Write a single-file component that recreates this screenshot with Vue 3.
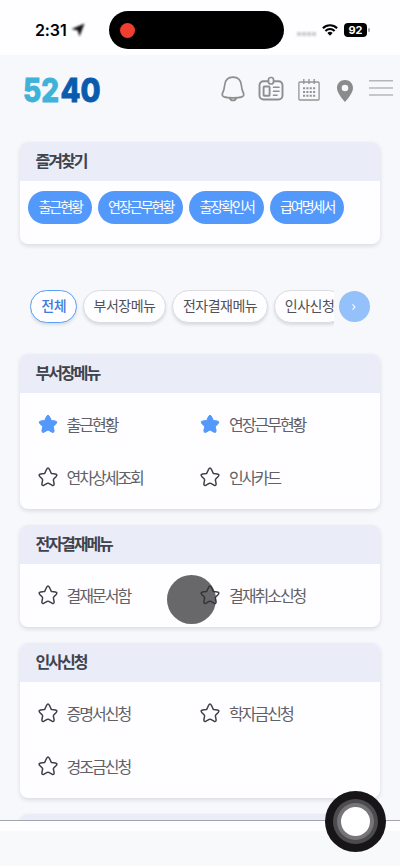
<script setup>
const favorites = ['출근현황', '연장근무현황', '출장확인서', '급여명세서']
const tabs = ['전체', '부서장메뉴', '전자결재메뉴', '인사신청']
const groups = [
  {
    title: '부서장메뉴',
    items: [
      { name: '출근현황', on: true },
      { name: '연장근무현황', on: true },
      { name: '연차상세조회' },
      { name: '인사카드' }
    ]
  },
  { title: '전자결재메뉴', items: [{ name: '결재문서함' }, { name: '결재취소신청' }] },
  { title: '인사신청', items: [{ name: '증명서신청' }, { name: '학자금신청' }, { name: '경조금신청' }] }
]
</script>

<template>
  <div class="phone">
    <header class="status">
      <span class="time">2:31</span>
      <svg class="arrow" width="16" height="16" viewBox="0 0 16 16"><path d="M14.500 1.500 9.500 14.500 7.700 8.500 1.500 7Z" /></svg>
      <div class="island"><span class="rec"></span></div>
      <span class="signal"><i v-for="n in 4" :key="n"></i></span>
      <svg class="wifi" width="16" height="12" viewBox="0 0 16 12">
        <path d="M.9 4.2a10.2 10.2 0 0 1 14.2 0M3.4 6.9a6.6 6.6 0 0 1 9.2 0" fill="none" stroke="#000" stroke-width="2.1" />
        <path d="M8 11.8 5.4 9.1a3.7 3.7 0 0 1 5.2 0Z" />
      </svg>
      <span class="battery">92</span><span class="cap"></span>
    </header>

    <nav class="topbar">
      <svg class="logo" width="82" height="48" viewBox="0 0 82 48">
        <text x="1" y="36" textLength="36" lengthAdjust="spacingAndGlyphs" fill="#3eb2d8" stroke="#3eb2d8">52</text>
        <text x="38.500" y="36" textLength="40" lengthAdjust="spacingAndGlyphs" fill="#095bae" stroke="#095bae">40</text>
      </svg>
      <div class="tools">
        <svg width="24" height="26" viewBox="0 0 24 26" fill="none" stroke="#8e8e8e" stroke-width="1.7" stroke-linejoin="round">
          <path d="M12 1.200C7 1.200 4.200 4.500 3.700 9c-.4 3.500-.7 5.300-1.900 7.500-1.100 2.200-.6 3.600 1.400 4.400 3.400 1.200 14.200 1.200 17.600 0 2-.8 2.500-2.200 1.400-4.400-1.200-2.200-1.500-4-1.900-7.500C19.800 4.500 17 1.200 12 1.200Z" />
          <path d="M8.700 21.700c.4 1.800 1.600 2.700 3.300 2.700s2.900-.9 3.300-2.700" />
        </svg>
        <svg width="26" height="26" viewBox="0 0 26 26" fill="none" stroke="#8e8e8e" stroke-width="1.9" stroke-linecap="round">
          <path d="M10 5.200H5.500a4 4 0 0 0-4 4v10.300a4 4 0 0 0 4 4h15a4 4 0 0 0 4-4V9.200a4 4 0 0 0-4-4H16" />
          <rect x="10.500" y="1.500" width="5" height="6.500" rx="2.300" stroke-width="1.700" />
          <rect x="5.600" y="10.500" width="6" height="9.200" rx=".7" />
          <path d="M15.500 11.300h5.500M15.500 15.200h5.500M15.500 19.200h3.500" stroke-width="1.600" />
        </svg>
        <svg width="22" height="24" viewBox="0 0 22 24" fill="none" stroke="#949494">
          <rect x=".9" y="4" width="20.200" height="18" rx="1" stroke-width="1.300" />
          <path d="M5.800 1v5M11 1v5M16.200 1v5" stroke-width="1.400" />
          <path d="M5 10.200h12.500M5 14h12.500M5 17.800h12.500" stroke-width="2" stroke-dasharray="2.100 1.250" />
        </svg>
        <svg width="18" height="24" viewBox="0 0 18 24">
          <path d="M9 1C4.400 1 1 4.400 1 8.900 1 14 7 20.600 9 23c2-2.400 8-9 8-14.100C17 4.400 13.600 1 9 1Zm0 4.700a3.300 3.300 0 1 1 0 6.600 3.300 3.300 0 0 1 0-6.600Z" fill="#8b8b8b" fill-rule="evenodd" />
        </svg>
        <svg width="24" height="20" viewBox="0 0 24 20"><path d="M0 2.800h24M0 9.900h24M0 17h24" stroke="#b6b6b8" stroke-width="1.500" /></svg>
      </div>
    </nav>

    <main class="content">
      <section class="card favorites">
        <h2>즐겨찾기</h2>
        <div class="pills"><span v-for="f in favorites" :key="f" class="pill">{{ f }}</span></div>
      </section>

      <div class="tabs">
        <div class="track">
          <span v-for="(t, i) in tabs" :key="t" class="tab" :class="{ active: i === 0 }">{{ t }}</span>
        </div>
        <button class="next" aria-label="다음">
          <svg width="6" height="8" viewBox="0 0 6 8"><path d="m1.500 1.300 2.500 2.700-2.500 2.700" fill="none" stroke="#fff" stroke-width="1.100" /></svg>
        </button>
      </div>

      <section v-for="g in groups" :key="g.title" class="card group">
        <h2>{{ g.title }}</h2>
        <ul>
          <li v-for="item in g.items" :key="item.name">
            <svg class="star" :class="{ on: item.on }" width="20" height="20" viewBox="0 0 20 20">
              <path d="M8.600 2.300q1.400-2.400 2.800 0l1.700 3.700q.3.500.9.600l3.300.4q2.600.5.900 2.500l-2.500 2.600q-.4.500-.3 1l.7 3.500q.2 2.500-2.100 1.600l-3.200-1.800q-.8-.4-1.600 0L6 18.200q-2.300.9-2.100-1.600l.7-3.500q.1-.5-.3-1L1.800 9.500Q.1 7.500 2.700 7L6 6.600q.6-.1.900-.6Z" />
            </svg>
            <span>{{ item.name }}</span>
          </li>
        </ul>
      </section>
      <div class="card peek"></div>
    </main>

    <footer class="bottom"></footer>
    <div class="touch"></div>
    <div class="assist"><div class="ring"><div class="ring inner"><div class="core"></div></div></div></div>
  </div>
</template>

<style>
body { margin: 0; background: #f6f8fb; }
</style>

<style scoped>
* { box-sizing: border-box; }
.phone {
  position: relative;
  display: flex;
  flex-direction: column;
  width: 400px;
  height: 866px;
  overflow: hidden;
  background: #f6f8fb;
  color: #3f434e;
  font-family: "Noto Sans CJK KR", sans-serif;
}
.status { display: flex; align-items: center; flex: none; height: 55px; padding: 5px 0 0 35px; background: #fefdff; }
.time { width: 34px; color: #000; font: 600 16px/20px Inter, sans-serif; letter-spacing: -0.1px; white-space: nowrap; }
.arrow { margin-left: 1px; filter: blur(0.9px); fill: #111; }
.island { display: flex; align-items: center; width: 175px; height: 38px; margin-left: 23px; padding-left: 11px; border-radius: 19px; background: #000; }
.rec { width: 15px; height: 15px; border-radius: 50%; background: #f03e31; }
.signal { display: flex; gap: 1px; margin: 7px 0 0 13px; filter: blur(0.8px); }
.signal i { width: 4px; height: 4px; border-radius: 1px; background: #c9c8cb; }
.wifi { margin-left: 6px; }
.battery { width: 23px; height: 13.500px; margin-left: 6px; border-radius: 4px; background: #000; color: #fff; font: 700 11px/14px Inter, sans-serif; text-align: center; }
.cap { width: 1.500px; height: 4px; margin-left: 1px; border-radius: 1px; background: #aaa; }

.topbar { display: flex; align-items: center; justify-content: space-between; flex: none; height: 69px; padding: 0 7px 0 22px; }
.logo { margin-top: 1px; font: 800 32px Inter, sans-serif; stroke-width: 0.8px; }
.tools { display: flex; align-items: center; margin-top: -1px; }
.tools svg:nth-child(1) { margin-right: 13px; }
.tools svg:nth-child(2) { margin-right: 14px; }
.tools svg:nth-child(3) { margin: 2px 16px 0 0; }
.tools svg:nth-child(4) { margin: 3px 15px 0 0; }
.tools svg:nth-child(5) { margin-top: -2px; }

.content { display: flex; flex-direction: column; flex: 1; min-height: 0; overflow: hidden; padding: 18px 20px 0; }
.card { flex: none; overflow: hidden; border-radius: 8px; background: #fefdff; box-shadow: 0 2px 4px rgba(40, 50, 70, 0.14); }
.card h2 { height: 39px; margin: 0; padding-left: 15.500px; background: #eaedf8; font-size: 16px; font-weight: 700; line-height: 36px; letter-spacing: -2px; }
.favorites { height: 102px; }
.pills { display: flex; gap: 6px; padding: 10px 8.400px; }
.pill { height: 33px; padding: 0 10px; border-radius: 17px; background: #5399fb; color: #fff; font-size: 14px; line-height: 31px; letter-spacing: -1.980px; white-space: nowrap; }

.tabs { display: flex; align-items: flex-start; flex: none; height: 110px; padding: 46px 10.300px 0; }
.track { display: flex; flex: none; gap: 5.500px; width: 303.500px; height: 42px; overflow: hidden; }
.tab { flex: none; height: 33px; padding: 0 10px; border: 1px solid #dcdce0; border-radius: 17px; background: #fefdff; box-shadow: 0 2px 3px rgba(40, 50, 70, 0.14); color: #505056; font-size: 14px; line-height: 29px; letter-spacing: -0.5px; white-space: nowrap; }
.tab.active { border-color: #5a9ffa; color: #3d7edb; font-weight: 500; }
.next { display: flex; align-items: center; justify-content: center; flex: none; width: 31px; height: 31px; margin: 1px 0 0 5px; padding: 0; border: 0; border-radius: 50%; background: #95c1fa; }

.group { margin-bottom: 16px; }
.group ul { display: grid; grid-template-columns: 162.500px 1fr; margin: 0; padding: 5px 0 5px 17.500px; list-style: none; }
.group li { display: flex; align-items: center; height: 53px; color: #606065; font-size: 16px; line-height: 24px; letter-spacing: -2px; white-space: nowrap; }
.group li span { margin: -2px 0 0 9px; }
.star { fill: none; stroke: #3f3f45; stroke-width: 1.500px; stroke-linejoin: round; margin-top: -2px; }
.star.on { fill: #5399fb; stroke: #5399fb; stroke-width: 1px; }
.peek { height: 40px; background: #eaedf8; }

.bottom { flex: none; height: 46px; border-top: 1px solid #a3a5ab; background: linear-gradient(#fefdff 10px, #f7f9fb 10px); }
.touch { position: absolute; top: 575px; left: 167px; width: 49px; height: 49px; border-radius: 50%; background: rgba(48, 46, 49, 0.73); }
.assist { position: absolute; top: 791px; left: 325px; display: flex; align-items: center; justify-content: center; width: 61px; height: 61px; border-radius: 50%; background: #171518; }
.ring { display: flex; align-items: center; justify-content: center; width: 45px; height: 45px; border-radius: 50%; background: #4c4b4d; }
.inner { width: 37px; height: 37px; background: #777578; }
.core { width: 29px; height: 29px; border-radius: 50%; background: #fff; }
</style>
